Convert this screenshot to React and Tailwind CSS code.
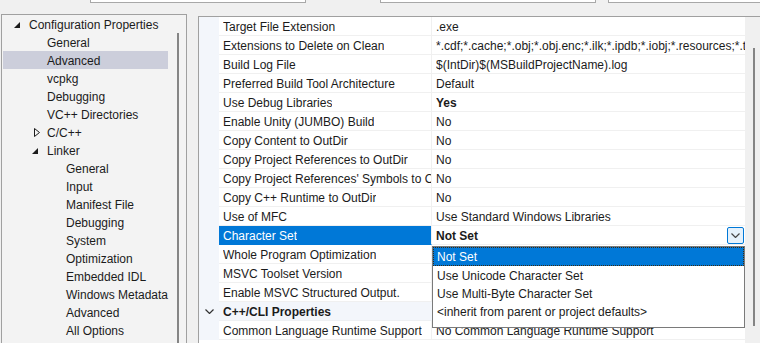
import React from "react";

const tree = [
  { label: "Configuration Properties", indent: 26, arrow: "open" },
  { label: "General", indent: 44 },
  { label: "Advanced", indent: 44, selected: true },
  { label: "vcpkg", indent: 44 },
  { label: "Debugging", indent: 44 },
  { label: "VC++ Directories", indent: 44 },
  { label: "C/C++", indent: 44, arrow: "closed" },
  { label: "Linker", indent: 44, arrow: "open" },
  { label: "General", indent: 63 },
  { label: "Input", indent: 63 },
  { label: "Manifest File", indent: 63 },
  { label: "Debugging", indent: 63 },
  { label: "System", indent: 63 },
  { label: "Optimization", indent: 63 },
  { label: "Embedded IDL", indent: 63 },
  { label: "Windows Metadata", indent: 63 },
  { label: "Advanced", indent: 63 },
  { label: "All Options", indent: 63 },
];

const props = [
  ["Target File Extension", ".exe"],
  ["Extensions to Delete on Clean", "*.cdf;*.cache;*.obj;*.obj.enc;*.ilk;*.ipdb;*.iobj;*.resources;*.tlb;*.tli;*.tlh;*.tmp;*.rsp"],
  ["Build Log File", "$(IntDir)$(MSBuildProjectName).log"],
  ["Preferred Build Tool Architecture", "Default"],
  ["Use Debug Libraries", "Yes", true],
  ["Enable Unity (JUMBO) Build", "No"],
  ["Copy Content to OutDir", "No"],
  ["Copy Project References to OutDir", "No"],
  ["Copy Project References' Symbols to OutDir", "No"],
  ["Copy C++ Runtime to OutDir", "No"],
  ["Use of MFC", "Use Standard Windows Libraries"],
  ["Character Set", "Not Set", true, "active"],
  ["Whole Program Optimization", ""],
  ["MSVC Toolset Version", ""],
  ["Enable MSVC Structured Output.", ""],
  ["C++/CLI Properties", "", false, "category"],
  ["Common Language Runtime Support", "No Common Language Runtime Support"],
];

const options = [
  "Not Set",
  "Use Unicode Character Set",
  "Use Multi-Byte Character Set",
  "<inherit from parent or project defaults>",
];

function Chevron({ className }) {
  return (
    <svg width="9" height="5" viewBox="0 0 9 5" className={className}>
      <path d="M0.5 0.5 L4.5 4.5 L8.5 0.5" fill="none" stroke="currentColor" strokeWidth="1.2" />
    </svg>
  );
}

function TreeArrow({ type }) {
  if (type === "open") {
    return (
      <svg width="6" height="6" viewBox="0 0 6 6">
        <polygon points="6,0 6,6 0,6" fill="#1b1b1b" />
      </svg>
    );
  }
  return (
    <svg width="6" height="9" viewBox="0 0 6 9">
      <polygon points="0.5,0.5 5.5,4.5 0.5,8.5" fill="none" stroke="#1b1b1b" strokeWidth="1" />
    </svg>
  );
}

export default function App() {
  return (
    <div className="w-[760px] h-[343px] overflow-hidden bg-[#f0f0f0] font-['Liberation_Sans',Arial,sans-serif] text-[12px] text-[#1b1b1b]">

      {/* ── top combo boxes (cut off) ── */}
      <div className="flex h-[14px]">
        <div className="ml-[90px] w-[216px] h-[3px] bg-white border-x border-b border-[#a8a8a8]" />
        <div className="ml-[74px] w-[216px] h-[3px] bg-white border-x border-b border-[#a8a8a8]" />
        <div className="ml-[12px] flex-1 h-[3px] bg-white border-l border-b border-[#a8a8a8]" />
      </div>

      <div className="flex items-start">

        {/* ── LEFT TREE ── */}
        <div className="ml-[1px] w-[186px] h-[340px] border border-[#a0a0a0] bg-[#f3f3f3] flex">
          <div className="w-[166px] pl-[1px]">
            {tree.map((t, i) => (
              <div
                key={i}
                className={`relative h-[18px] pt-px flex items-center whitespace-nowrap ${t.selected ? "bg-[#cccedb]" : ""}`}
                style={{ paddingLeft: t.indent }}
              >
                {t.arrow && (
                  <span
                    className={`absolute flex items-center ${t.arrow === "open" ? "top-[7px]" : "top-[5px]"}`}
                    style={{ left: t.indent - (t.arrow === "open" ? 15 : 13) }}
                  >
                    <TreeArrow type={t.arrow} />
                  </span>
                )}
                {t.label}
              </div>
            ))}
          </div>
          <div className="flex-1 flex justify-center pl-[2px]">
            <div className="mt-[18px] w-[2px] h-[320px] bg-[#858585]" />
          </div>
        </div>

        {/* ── PROPERTY GRID ── */}
        <div className="ml-[11px] mt-[2px] flex-1 h-[330px] border-t border-l border-[#a0a0a0] bg-white flex">
          <div className="relative w-[546px]">
            {props.map(([name, value, bold, kind], i) => (
              <div key={i} className="flex h-[19px]">
                <div className="w-[20px] shrink-0 bg-[#f3f6fb] flex items-center justify-center">
                  {kind === "category" && <Chevron className="text-[#333]" />}
                </div>
                {kind === "category" ? (
                  <div className="flex-1 flex items-center pl-[4px] pt-px font-bold bg-[#f3f6fb] border-b border-[#eef0f3]">
                    {name}
                  </div>
                ) : (
                  <>
                    <div
                      className={`w-[213px] shrink-0 flex items-center pl-[4px] pt-px overflow-hidden border-r border-[#f0f0f0] ${
                        kind === "active" ? "bg-[#0078d7] text-white border-b border-b-[#0078d7]" : "border-b border-b-[#f0f0f0]"
                      }`}
                    >
                      <span className="whitespace-nowrap overflow-hidden">{name}</span>
                    </div>
                    <div className={`flex-1 min-w-0 flex items-center pl-[4px] pt-px border-b border-[#f0f0f0] ${bold ? "font-bold" : ""}`}>
                      <span className="flex-1 min-w-0 whitespace-nowrap overflow-hidden">{value}</span>
                      {kind === "active" && (
                        <span className="w-[17px] h-[17px] mr-[1px] -mt-px flex items-center justify-center bg-[#e5f1fb] border border-[#0078d7] rounded-[2px] text-[#444]">
                          <Chevron />
                        </span>
                      )}
                    </div>
                  </>
                )}
              </div>
            ))}

            {/* dropdown list */}
            <div className="absolute left-[233px] top-[229px] w-[313px] h-[82px] bg-white border border-[#7a7a7a]">
              {options.map((o, i) => (
                <div
                  key={i}
                  className={`flex items-center pt-px whitespace-nowrap ${
                    i === 0 ? "h-[19px] pl-[3px] bg-[#0078d7] text-white border border-dotted border-[#3a2a10]" : "h-[18px] pl-[4px]"
                  }`}
                >
                  {o}
                </div>
              ))}
            </div>
          </div>

          {/* scrollbar */}
          <div className="flex-1 bg-[#f0f0f0] flex justify-center pl-[2px]">
            <div className="mt-[31px] w-[2px] h-[278px] bg-[#858585]" />
          </div>
        </div>

      </div>
    </div>
  );
}
